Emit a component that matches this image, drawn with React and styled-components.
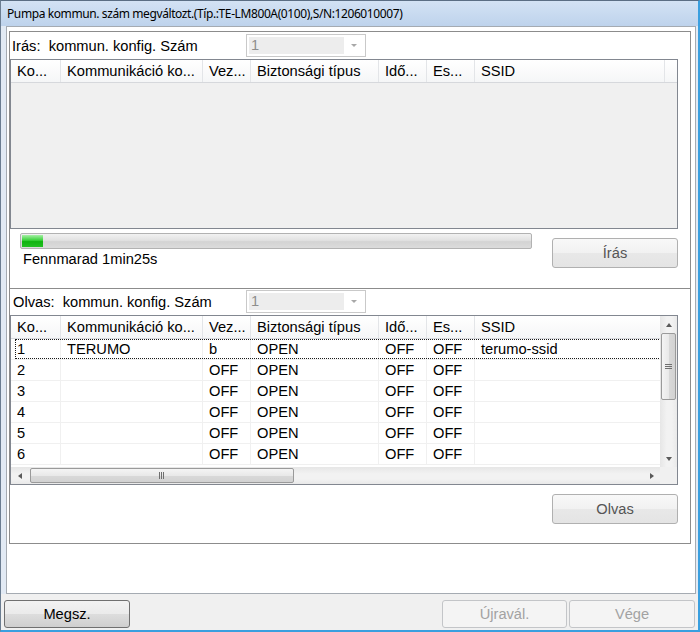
import styled, { createGlobalStyle } from 'styled-components';

const GlobalStyle = createGlobalStyle`
  html, body {
    margin: 0;
    padding: 0;
    background: #ffffff;
  }
  * {
    box-sizing: border-box;
  }
`;

const COLUMNS = [
  { key: 'no', title: 'Ko...', width: 50 },
  { key: 'name', title: 'Kommunikáció ko...', width: 142 },
  { key: 'mode', title: 'Vez...', width: 48 },
  { key: 'sec', title: 'Biztonsági típus', width: 128 },
  { key: 'time', title: 'Idő...', width: 48 },
  { key: 'es', title: 'Es...', width: 48 },
  { key: 'ssid', title: 'SSID', width: 190 },
];

const ROWS = [
  { no: '1', name: 'TERUMO', mode: 'b', sec: 'OPEN', time: 'OFF', es: 'OFF', ssid: 'terumo-ssid' },
  { no: '2', name: '', mode: 'OFF', sec: 'OPEN', time: 'OFF', es: 'OFF', ssid: '' },
  { no: '3', name: '', mode: 'OFF', sec: 'OPEN', time: 'OFF', es: 'OFF', ssid: '' },
  { no: '4', name: '', mode: 'OFF', sec: 'OPEN', time: 'OFF', es: 'OFF', ssid: '' },
  { no: '5', name: '', mode: 'OFF', sec: 'OPEN', time: 'OFF', es: 'OFF', ssid: '' },
  { no: '6', name: '', mode: 'OFF', sec: 'OPEN', time: 'OFF', es: 'OFF', ssid: '' },
];

const Window = styled.div`
  width: 700px;
  height: 632px;
  display: flex;
  flex-direction: column;
  background: #e2eaf4;
  border-top: 1px solid #5b6e84;
  border-left: 1px solid #6b7d91;
  border-right: 2px solid #3a9fdf;
  border-bottom: 2px solid #3a9fdf;
  font-family: "Liberation Sans", Arial, sans-serif;
  font-size: 11pt;
  font-weight: normal;
  color: #000;
`;

const TitleBar = styled.div`
  height: 25px;
  flex-shrink: 0;
  display: flex;
  align-items: center;
  padding-left: 6px;
  background: linear-gradient(#d3e2f4, #bed3ec);
  font-family: "Noto Sans", "Open Sans", sans-serif;
  font-size: 12px;
  letter-spacing: -0.4px;
  color: #000;
  white-space: nowrap;
`;

const Client = styled.div`
  flex: 1;
  margin: 0 2px 0 5px;
  background: #ffffff;
  border: 1px solid #a5abb2;
  display: flex;
  flex-direction: column;
`;

const Group = styled.section`
  height: ${(p) => p.$h}px;
  flex-shrink: 0;
  margin: ${(p) => (p.$first ? '4px 4px 0 2px' : '0 4px 0 2px')};
  border: 1px solid #8c8c8c;
  border-top-width: ${(p) => (p.$first ? '1px' : '0')};
  display: flex;
  flex-direction: column;
`;

const LabelRow = styled.div`
  height: 23px;
  margin-top: ${(p) => p.$top}px;
  display: flex;
  align-items: center;
`;

const Label = styled.span`
  width: 236px;
  padding-left: ${(p) => p.$pad}px;
  white-space: pre;
`;

const Combo = styled.div`
  width: 120px;
  height: 23px;
  border: 1px solid #c9c9c9;
  background: #ffffff;
  display: flex;
  align-items: stretch;
  padding: 2px;
`;

const ComboField = styled.div`
  flex: 1;
  background: #ededed;
  color: #8d8d8d;
  padding-left: 2px;
  line-height: 17px;
`;

const ComboArrow = styled.div`
  width: 19px;
  display: flex;
  align-items: center;
  justify-content: center;

  &::before {
    content: '';
    border-left: 3px solid transparent;
    border-right: 3px solid transparent;
    border-top: 3px solid #a8a8a8;
  }
`;

const List = styled.div`
  width: 668px;
  height: 170px;
  margin-top: 2px;
  border: 1px solid #828790;
  display: grid;
  grid-template-columns: ${(p) => (p.$scroll ? '1fr 17px' : '1fr')};
  grid-template-rows: ${(p) => (p.$scroll ? '1fr 17px' : '1fr')};
  overflow: hidden;
  background: ${(p) => (p.$disabled ? '#f0f0f0' : '#ffffff')};
`;

const Viewport = styled.div`
  overflow: hidden;
  min-width: 0;
  min-height: 0;
`;

const HeaderRow = styled.div`
  display: flex;
  height: 23px;
  width: max-content;
  min-width: 100%;
  background: linear-gradient(#ffffff, #f5f6f7);
  border-bottom: 1px solid #d6d8dc;
`;

const HeaderCell = styled.div`
  width: ${(p) => p.$w}px;
  flex-shrink: 0;
  padding-left: 6px;
  line-height: 22px;
  white-space: nowrap;
  overflow: hidden;
  border-right: 1px solid #e3e5e8;
`;

const Row = styled.div`
  position: relative;
  display: flex;
  height: 21px;
  width: max-content;
  min-width: 100%;
  border-bottom: 1px solid #f0f0f0;

  ${(p) =>
    p.$focus &&
    `
    &::after {
      content: '';
      position: absolute;
      top: 0;
      bottom: 0;
      left: 4px;
      right: 0;
      border: 1px dotted #1a1a1a;
    }
  `}
`;

const Cell = styled.div`
  width: ${(p) => p.$w}px;
  flex-shrink: 0;
  padding-left: 6px;
  line-height: 21px;
  white-space: nowrap;
  overflow: hidden;
  border-right: 1px solid #f0f0f0;
`;

const ScrollBar = styled.div`
  display: flex;
  flex-direction: ${(p) => (p.$vertical ? 'column' : 'row')};
  background: ${(p) =>
    p.$vertical
      ? 'linear-gradient(90deg, #e6e6e6, #f2f2f2 40%, #f2f2f2 70%, #e9e9e9)'
      : 'linear-gradient(#e6e6e6, #f2f2f2 40%, #f2f2f2 70%, #e9e9e9)'};
`;

const ArrowBtn = styled.div`
  width: 17px;
  height: 17px;
  flex-shrink: 0;
  display: flex;
  align-items: center;
  justify-content: center;

  &::before {
    content: '';
    ${(p) => {
      if (p.$dir === 'up') return 'border-left: 3px solid transparent; border-right: 3px solid transparent; border-bottom: 4px solid #5a5a5a;';
      if (p.$dir === 'down') return 'border-left: 3px solid transparent; border-right: 3px solid transparent; border-top: 4px solid #5a5a5a;';
      if (p.$dir === 'left') return 'border-top: 3px solid transparent; border-bottom: 3px solid transparent; border-right: 4px solid #5a5a5a;';
      return 'border-top: 3px solid transparent; border-bottom: 3px solid transparent; border-left: 4px solid #5a5a5a;';
    }}
  }
`;

const Track = styled.div`
  flex: 1;
  display: flex;
  flex-direction: ${(p) => (p.$vertical ? 'column' : 'row')};
  padding: ${(p) => (p.$vertical ? '0 1px' : '1px 0')};
`;

const Thumb = styled.div`
  ${(p) => (p.$vertical ? `height: ${p.$size}px;` : `width: ${p.$size}px; margin-left: 2px;`)}
  flex-shrink: 0;
  border: 1px solid #9a9a9a;
  border-radius: 2px;
  background: ${(p) =>
    p.$vertical
      ? 'linear-gradient(90deg, #f4f4f4, #e9e9e9 50%, #d9d9d9 51%, #d2d2d2)'
      : 'linear-gradient(#f4f4f4, #e9e9e9 50%, #d9d9d9 51%, #d2d2d2)'};
  display: flex;
  align-items: center;
  justify-content: center;
`;

const Corner = styled.div`
  background: #f0f0f0;
`;

const ProgressArea = styled.div`
  display: flex;
  align-items: flex-start;
  padding-right: 12px;
`;

const ProgressCol = styled.div`
  margin: 4px 0 0 10px;
  width: 512px;
`;

const Progress = styled.div`
  height: 16px;
  border: 1px solid #b2b2b2;
  border-radius: 2px;
  background: linear-gradient(#f2f2f2, #e2e2e2 45%, #d3d3d3 55%, #dcdcdc);
  padding: 1px;
`;

const ProgressFill = styled.div`
  height: 100%;
  background: linear-gradient(#a6efa6, #37d037 45%, #0fb30f 55%, #22c022);
`;

const Status = styled.div`
  margin-top: 2px;
  padding-left: 3px;
  line-height: 17px;
`;

const ButtonRow = styled.div`
  display: flex;
  justify-content: flex-end;
  padding-right: 12px;
  margin-top: 9px;
`;

const Button = styled.div`
  width: ${(p) => p.$w || 126}px;
  height: ${(p) => p.$h || 30}px;
  flex-shrink: 0;
  margin-top: ${(p) => p.$mt || 0}px;
  margin-left: ${(p) => (p.$push ? 'auto' : '0')};
  border-radius: 3px;
  display: flex;
  align-items: center;
  justify-content: center;
  font-weight: normal;
  ${(p) => {
    if (p.$variant === 'disabled')
      return 'border: 1px solid #c3c5c8; background: #f4f4f4; color: #a2a2a2;';
    if (p.$variant === 'dim')
      return 'border: 1px solid #b0b0b0; background: linear-gradient(#f8f8f8, #f1f1f1 50%, #e8e8e8 51%, #e4e4e4); color: #555555;';
    return 'border: 1px solid #707070; background: linear-gradient(#f2f2f2, #ebebeb 50%, #dddddd 51%, #cfcfcf); color: #000;';
  }}
`;

const BottomBar = styled.div`
  height: 36px;
  flex-shrink: 0;
  background: #f0f0f0;
  display: flex;
  align-items: flex-start;
  padding: 6px 3px 0 3px;
  gap: 2px;
`;

const Spacer = styled.div`
  flex: 1;
`;

function ListHeader() {
  return (
    <HeaderRow>
      {COLUMNS.map((c) => (
        <HeaderCell key={c.key} $w={c.width}>
          {c.title}
        </HeaderCell>
      ))}
    </HeaderRow>
  );
}

function GripLines({ vertical }) {
  return vertical ? (
    <svg width="7" height="6" viewBox="0 0 7 6">
      <path d="M0 0.5h7M0 2.5h7M0 4.5h7" stroke="#6f6f6f" strokeWidth="1" />
    </svg>
  ) : (
    <svg width="6" height="7" viewBox="0 0 6 7">
      <path d="M0.5 0v7M2.5 0v7M4.5 0v7" stroke="#6f6f6f" strokeWidth="1" />
    </svg>
  );
}

export default function App() {
  return (
    <Window>
      <GlobalStyle />
      <TitleBar>Pumpa kommun. szám megváltozt.(Típ.:TE-LM800A(0100),S/N:1206010007)</TitleBar>
      <Client>
        <Group $first $h={258}>
          <LabelRow $top={2}>
            <Label $pad={2}>{'Irás:  kommun. konfig. Szám'}</Label>
            <Combo>
              <ComboField>1</ComboField>
              <ComboArrow />
            </Combo>
          </LabelRow>
          <List $disabled>
            <Viewport>
              <ListHeader />
            </Viewport>
          </List>
          <ProgressArea>
            <ProgressCol>
              <Progress>
                <ProgressFill style={{ width: '21px' }} />
              </Progress>
              <Status>Fennmarad 1min25s</Status>
            </ProgressCol>
            <Button $variant="dim" $mt={9} $push>
              Írás
            </Button>
          </ProgressArea>
        </Group>
        <Group $h={255}>
          <LabelRow $top={1}>
            <Label $pad={3}>{'Olvas:  kommun. konfig. Szám'}</Label>
            <Combo>
              <ComboField>1</ComboField>
              <ComboArrow />
            </Combo>
          </LabelRow>
          <List $scroll>
            <Viewport>
              <ListHeader />
              {ROWS.map((r, i) => (
                <Row key={r.no} $focus={i === 0}>
                  {COLUMNS.map((c) => (
                    <Cell key={c.key} $w={c.width}>
                      {r[c.key]}
                    </Cell>
                  ))}
                </Row>
              ))}
            </Viewport>
            <ScrollBar $vertical>
              <ArrowBtn $dir="up" />
              <Track $vertical>
                <Thumb $vertical $size={67}>
                  <GripLines vertical />
                </Thumb>
              </Track>
              <ArrowBtn $dir="down" />
            </ScrollBar>
            <ScrollBar>
              <ArrowBtn $dir="left" />
              <Track>
                <Thumb $size={264}>
                  <GripLines />
                </Thumb>
              </Track>
              <ArrowBtn $dir="right" />
            </ScrollBar>
            <Corner />
          </List>
          <ButtonRow>
            <Button $variant="dim">Olvas</Button>
          </ButtonRow>
        </Group>
        <Spacer />
      </Client>
      <BottomBar>
        <Button $variant="normal" $h={28}>
          Megsz.
        </Button>
        <Spacer />
        <Button $variant="disabled" $w={125} $h={28}>
          Újravál.
        </Button>
        <Button $variant="disabled" $h={28}>
          Vége
        </Button>
      </BottomBar>
    </Window>
  );
}
